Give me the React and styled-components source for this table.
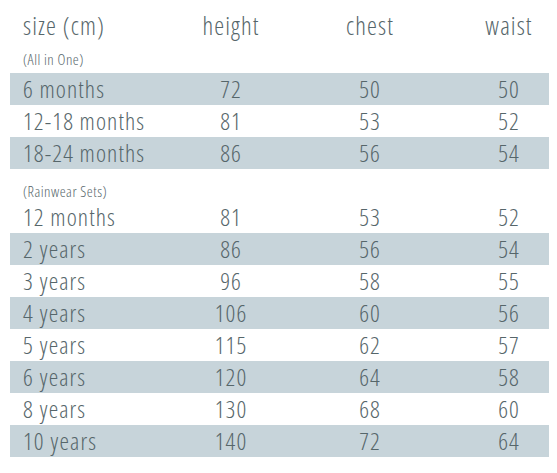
import React from "react";
import styled, { createGlobalStyle } from "styled-components";

const Global = createGlobalStyle`
  html, body { margin: 0; padding: 0; background: #ffffff; }
  body {
    font-family: "Open Sans", "DejaVu Sans Condensed", "Liberation Sans", sans-serif;
    font-stretch: 75%;
    font-weight: 300;
    color: #56666a;
  }
`;

const Chart = styled.div`
  width: 539px;
  margin-left: 10px;
  padding-top: 6px;
  padding-bottom: 16px;
`;

const Grid = styled.div`
  display: grid;
  grid-template-columns: 122px 80px 80px 80px;
  column-gap: 59px;
  align-items: center;
`;

const HeaderRow = styled(Grid)`
  height: 39px;
  font-size: 25px;
  letter-spacing: 1.1px;
`;

const Row = styled(Grid)`
  height: 32px;
  font-size: 24px;
  letter-spacing: 1.1px;
  background: ${(p) => (p.$striped ? "#c7d4da" : "transparent")};
`;

const Cell = styled.div`
  white-space: nowrap;
  text-align: ${(p) => (p.$first ? "left" : "center")};
  padding-left: ${(p) => (p.$first ? "13px" : "0")};
  line-height: 1;
`;

const SectionLabel = styled.div`
  height: ${(p) => p.$h}px;
  display: flex;
  align-items: flex-end;
  padding-left: 13px;
  padding-bottom: ${(p) => p.$pb}px;
  box-sizing: border-box;
  font-size: 15px;
  letter-spacing: 0.5px;
`;

const sections = [
  {
    label: "(All in One)",
    h: 28,
    pb: 4,
    rows: [
      ["6 months", 72, 50, 50],
      ["12-18 months", 81, 53, 52],
      ["18-24 months", 86, 56, 54],
    ],
    stripeEven: true,
  },
  {
    label: "(Rainwear Sets)",
    h: 32,
    pb: 0,
    rows: [
      ["12 months", 81, 53, 52],
      ["2 years", 86, 56, 54],
      ["3 years", 96, 58, 55],
      ["4 years", 106, 60, 56],
      ["5 years", 115, 62, 57],
      ["6 years", 120, 64, 58],
      ["8 years", 130, 68, 60],
      ["10 years", 140, 72, 64],
    ],
    stripeEven: false,
  },
];

export default function App() {
  return (
    <>
      <Global />
      <Chart>
        <HeaderRow>
          <Cell $first>size (cm)</Cell>
          <Cell>height</Cell>
          <Cell>chest</Cell>
          <Cell>waist</Cell>
        </HeaderRow>
        {sections.map((s) => (
          <section key={s.label}>
            <SectionLabel $h={s.h} $pb={s.pb}>{s.label}</SectionLabel>
            {s.rows.map((r, i) => (
              <Row key={r[0]} $striped={s.stripeEven ? i % 2 === 0 : i % 2 === 1}>
                <Cell $first>{r[0]}</Cell>
                <Cell>{r[1]}</Cell>
                <Cell>{r[2]}</Cell>
                <Cell>{r[3]}</Cell>
              </Row>
            ))}
          </section>
        ))}
      </Chart>
    </>
  );
}
